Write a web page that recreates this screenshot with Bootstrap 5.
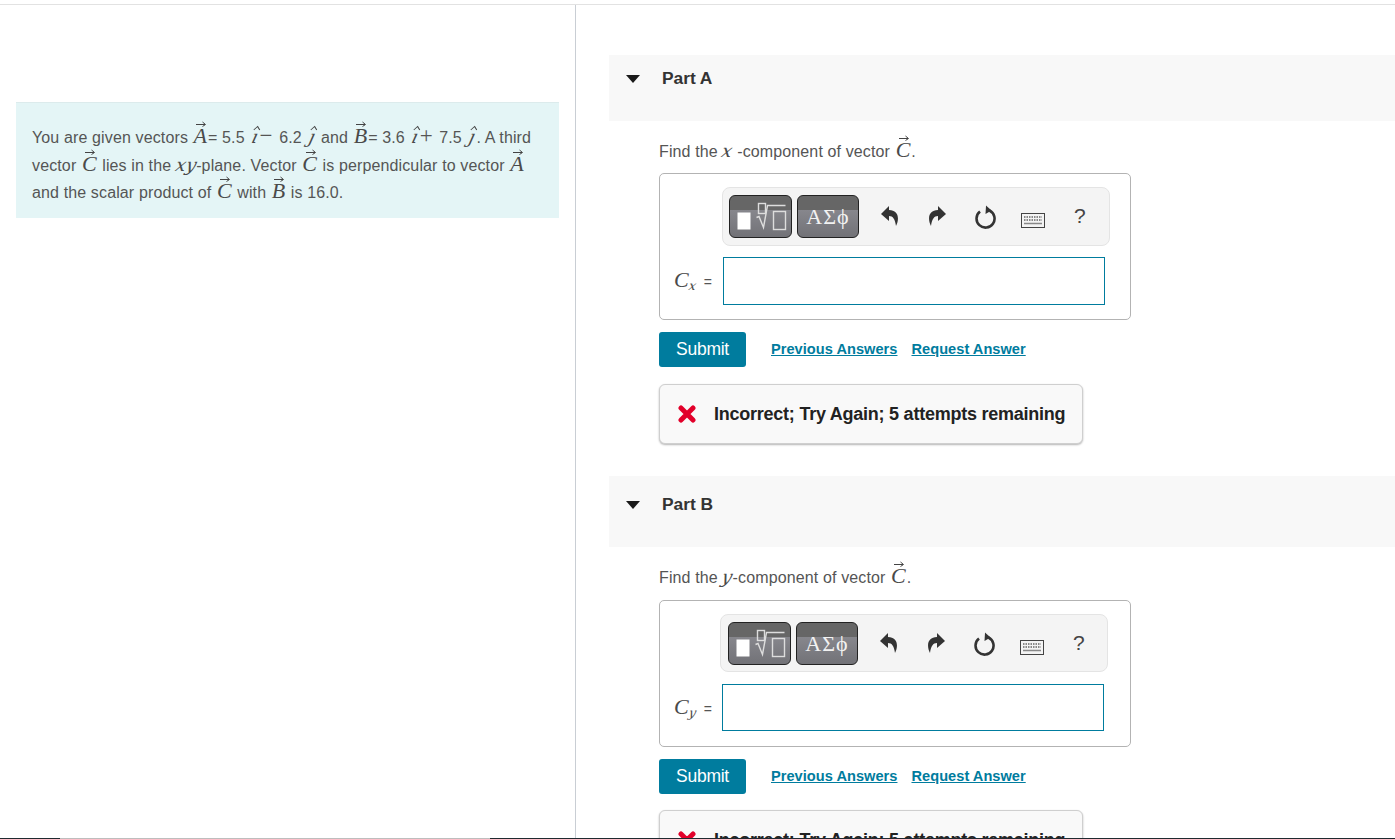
<!DOCTYPE html>
<html lang="en">
<head>
<meta charset="utf-8">
<title>Part A and Part B</title>
<link rel="stylesheet" href="https://cdn.jsdelivr.net/npm/bootstrap@5.3.0/dist/css/bootstrap.min.css">
<style>
html,body{height:839px;overflow:hidden;background:#fff}
body{font-family:"Liberation Sans",Arial,sans-serif;font-size:16px;color:#555;letter-spacing:.13px;position:relative}
.page-rule{height:5px;border-bottom:1px solid #e2e2e2}
.page-cols{height:834px}
.left-col{width:576px;flex:none;border-right:1px solid #c9ced4;padding:97px 16px 0 16px}
.intro{background:#e4f5f6;border-top:1px solid #dcebec;height:116px;padding:21px 16px 0 16px;line-height:27.5px;white-space:nowrap}
.right-col{flex:1 1 auto;min-width:0;padding:50px 0 0 33px}
.part-head{background:#f8f8f8;height:66px;padding:10px 0 0 17px;font-weight:700;color:#333;font-size:17.4px;letter-spacing:-.05px;gap:21px;margin-bottom:18px}
.part-b .part-head{height:71px;padding-top:15px}
.caret{width:0;height:0;border-left:7px solid transparent;border-right:7px solid transparent;border-top:8px solid #1a1a1a;margin-top:10px;margin-right:1px}
.part-body{padding-left:50px}
.ask{height:34px;line-height:24px;white-space:nowrap}
.part-b .ask{height:35px}
.ans-box{width:472px;height:147px;border:1px solid #b3b3b3;border-radius:5px;padding:13px 20px 0 0}
.tools{width:388px;height:59px;margin-left:62px;background:#f4f4f4;border:1px solid #e4e4e4;border-radius:8px;padding:7px 0 0 6px}
.part-b .tools{height:58px;margin-left:60px;padding-left:7px}
.pal{height:43px;border:1px solid #222;border-radius:6px;background:linear-gradient(#666 0,#666 33%,#87878d 33%,#727277 100%);color:#f2f2f2;display:flex;align-items:center;justify-content:center}
.pal1{width:63px;margin-right:5px}
.pal2{width:62px;font-family:"Liberation Serif",serif;font-size:22px;margin-right:22px;letter-spacing:1px}
.tool-ic{flex:none;display:block}
.ic-undo{margin:10px 29px 0 0}
.ic-redo{margin:10px 29px 0 0}
.ic-ref{margin:10px 24px 0 0}
.ic-key{margin:18px 29px 0 0}
.ic-q{font-size:21px;color:#444;margin-top:9px;line-height:24px}
.ans-row{margin-top:11px;height:48px}
.part-b .ans-row{margin-top:12px;height:47px}
.ans-lab{width:63px;flex:none;padding-left:14px;white-space:nowrap;font-size:14px}
.part-b .ans-lab{width:62px}
.ans-input{width:382px;height:100%;border:1px solid #007c9e;background:#fff;border-radius:0;margin:0;padding:0 6px;outline:0;display:block}
.act-row{margin-top:12px;height:35px}
.sub-btn{width:87px;height:35px;background:#007c9e;color:#fff;border:0;border-radius:3px;padding:0;font-size:17.5px;letter-spacing:-.25px;line-height:33px;margin-right:25px;font-family:inherit}
.act-link{color:#007c9e;font-weight:700;font-size:14.6px;letter-spacing:.03px;text-decoration:underline;margin-right:14px;white-space:nowrap}
.feedback{width:424px;height:60px;margin-top:17px;margin-bottom:32px;background:#f9f9f9;border:1px solid #cfcfcf;border-radius:6px;box-shadow:0 1px 2px #b5b5b5;padding-left:18px;font-weight:700;color:#222;font-size:18px;letter-spacing:-.24px;gap:18px;white-space:nowrap}
.part-b .feedback{margin-top:16px}
.m{font-family:"Liberation Serif",serif;font-style:italic;font-size:22px;color:#4a4a4a;line-height:1;letter-spacing:0}
.mv{font-family:"DejaVu Serif",serif;font-style:italic;font-size:18px;color:#4a4a4a;line-height:1;letter-spacing:0;display:inline-block;transform:skewX(-14deg)}
.op{font-family:"Liberation Serif",serif;font-size:23px;line-height:1;letter-spacing:0;margin:0 2px 0 0}
.vec,.hat{position:relative;display:inline-block}
.vec{margin:0 1px}
.vec svg{position:absolute;left:50%;top:-4px;margin-left:-4px}
.hat{margin:0 1.5px 0 3px}
.hat svg{position:absolute;left:50%;top:-3px;margin-left:-4px}
.sub-mv{font-size:12.5px;vertical-align:-3px}
.end-bar{position:absolute;left:0;right:0;top:838px;height:1px;background:#1f2a30}
.end-gap{position:absolute;left:60px;width:430px;top:0;height:1px;background:#bdbdbd}
</style>
</head>
<body>
<div class="page-rule"></div>
<div class="d-flex page-cols">
  <div class="left-col">
    <div class="intro" id="intro"></div>
  </div>
  <div class="right-col" id="parts"></div>
</div>
<div class="end-bar"><div class="end-gap"></div></div>
<template id="part">
 <div class="one-part">
  <div class="part-head d-flex"><span class="caret"></span><span class="pname"></span></div>
  <div class="part-body">
    <div class="ask"></div>
    <div class="ans-box">
      <div class="tools d-flex align-items-start">
        <div class="pal pal1"><svg width="58" height="36" viewBox="0 0 58 36"><rect x="5.500" y="13.500" width="13" height="17" fill="#fff"/><rect x="26.500" y="4.500" width="7" height="10" fill="none" stroke="#ddd" stroke-width="1.400"/><path d="M24.500 18.500L27 17.500L31.500 28.500L35.500 6.500H53.500" fill="none" stroke="#ddd" stroke-width="1.400"/><rect x="41.500" y="12.500" width="12" height="18" fill="none" stroke="#ddd" stroke-width="1.400"/></svg></div>
        <div class="pal pal2">ΑΣϕ</div>
        <svg class="tool-ic ic-undo" width="18" height="22" viewBox="0 0 18 22"><path d="M8 1L0 9L8 16V11C12 11 14 14 15 21C19 13 17 5 8 5Z" fill="#333"/></svg>
        <svg class="tool-ic ic-redo" width="18" height="22" viewBox="0 0 18 22"><path d="M10 1L18 9L10 16V11C6 11 4 14 3 21C-1 13 1 5 10 5Z" fill="#333"/></svg>
        <svg class="tool-ic ic-ref" width="22" height="24" viewBox="0 0 22 24"><path d="M14.500 5.500A9 9 0 1 1 5 6.500" fill="none" stroke="#333" stroke-width="2.600"/><path d="M11 0.500L16.500 5.500L10.500 9Z" fill="#333"/></svg>
        <svg class="tool-ic ic-key" width="24" height="15" viewBox="0 0 24 15"><rect x=".5" y=".5" width="23" height="14" fill="#f4f4f4" stroke="#444"/><path d="M3 4H21M3 7H21" stroke="#666" stroke-width="1.500" stroke-dasharray="1.500 1"/><path d="M3 10.500H21" stroke="#888" stroke-width="1.500"/></svg>
        <span class="ic-q">?</span>
      </div>
      <div class="ans-row d-flex align-items-center">
        <div class="ans-lab"><span class="m">C</span><span class="mv sub-mv"></span> &nbsp;=</div>
        <input class="ans-input" type="text" aria-label="answer">
      </div>
    </div>
    <div class="act-row d-flex align-items-center">
      <button class="sub-btn" type="button">Submit</button>
      <a class="act-link" href="#">Previous Answers</a>
      <a class="act-link" href="#">Request Answer</a>
    </div>
    <div class="feedback d-flex align-items-center">
      <svg width="18" height="18" viewBox="0 0 18 18"><path d="M3 3L15 15M15 3L3 15" stroke="#e2002a" stroke-width="5" stroke-linecap="round"/></svg>
      <span>Incorrect; Try Again; 5 attempts remaining</span>
    </div>
  </div>
 </div>
</template>
<script>
const arrow='<svg width="10" height="6" viewBox="0 0 10 6"><path d="M0 3.5H9M6.5 1L9.500 3.500L6.500 5.500" fill="none" stroke="#444"/></svg>';
const hatSvg='<svg width="8" height="6" viewBox="0 0 8 6"><path d="M1 5L4 1.500L7 5" fill="none" stroke="#444"/></svg>';
const vec=c=>'<span class="m vec">'+c+arrow+'</span>';
const hat=c=>'<span class="mv hat">'+c+hatSvg+'</span>';
document.getElementById('intro').innerHTML=
 'You are given vectors '+vec('A')+'= 5.5 '+hat('ı')+'<span class="op">−</span> 6.2 '+hat('ȷ')+' and '+vec('B')+'= 3.6 '+hat('ı')+'<span class="op">+</span> 7.5 '+hat('ȷ')+'. A third<br>'+
 'vector '+vec('C')+' lies in the <span class="mv">xy</span>-plane. Vector '+vec('C')+' is perpendicular to vector '+vec('A')+'<br>'+
 'and the scalar product of '+vec('C')+' with '+vec('B')+' is 16.0.';
const data=[['Part A','x',' -component',''],['Part B','y','-component','part-b']];
const root=document.getElementById('parts'),tpl=document.getElementById('part');
data.forEach(([n,v,rest,cls])=>{
  const f=tpl.content.cloneNode(true);
  f.querySelector('.pname').textContent=n;
  if(cls)f.querySelector('.one-part').classList.add(cls);
  f.querySelector('.ask').innerHTML='Find the <span class="mv">'+v+'</span>'+rest+' of vector '+vec('C')+'.';
  f.querySelector('.sub-mv').textContent=v;
  root.appendChild(f);
});
</script>
<script src="https://cdn.jsdelivr.net/npm/bootstrap@5.3.0/dist/js/bootstrap.bundle.min.js"></script>
</body>
</html>
